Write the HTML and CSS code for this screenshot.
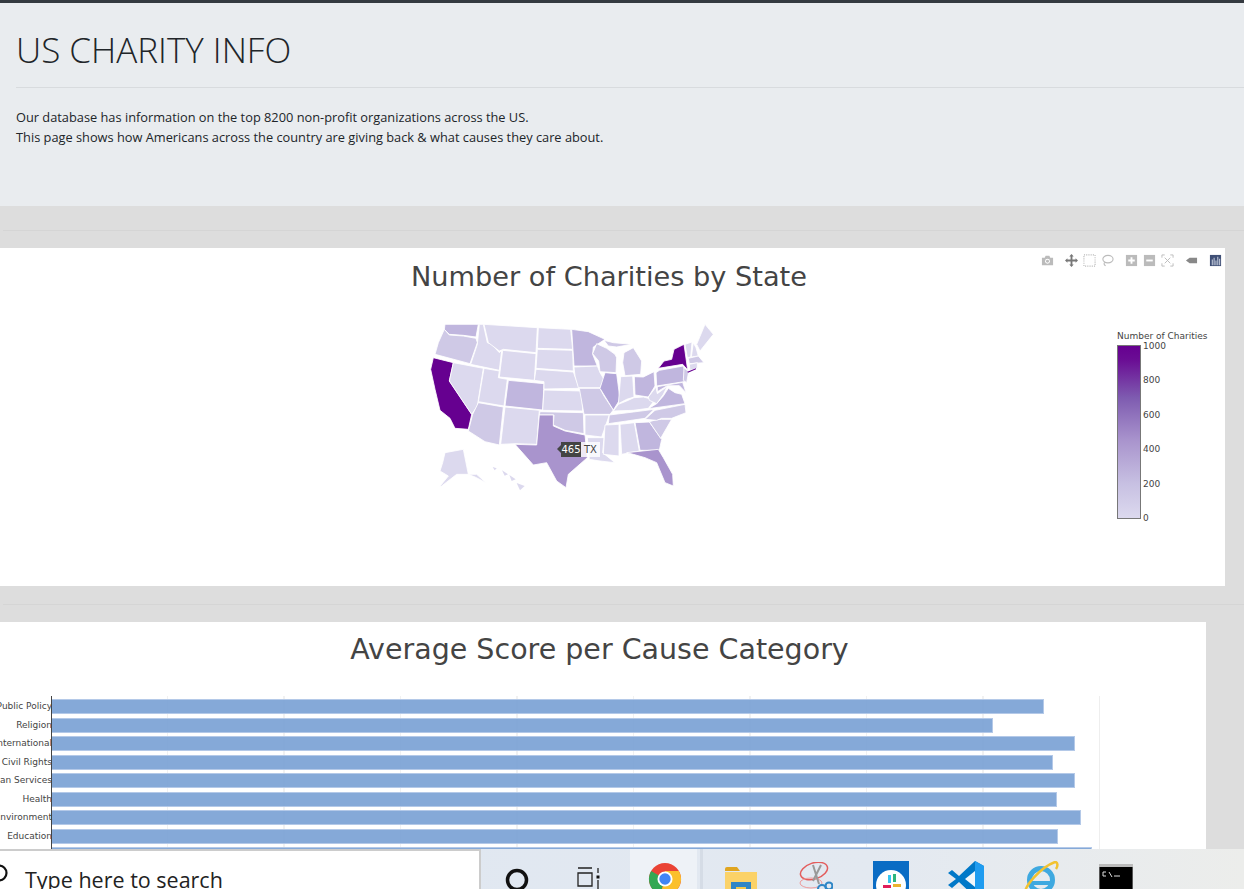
FILE: index.html
```html
<!DOCTYPE html>
<html lang="en">

<head>
    <meta charset="UTF-8">
    <meta name="viewport" content="width=device-width, initial-scale=1.0">
    <title>US Charity Info</title>
    <link rel="stylesheet" href="styles.css">
</head>

<body>
    <div class="page">
        <header class="jumbotron">
            <h1>US CHARITY INFO</h1>
            <hr class="jumbo-line">
            <p>Our database has information on the top 8200 non-profit organizations across the US.<br>This page shows how Americans across the country are giving back &amp; what causes they care about.</p>
        </header>

        <hr class="section-line">

        <!-- map chart -->
        <section class="chart chart-map">
            <div class="modebar">
                <svg class="mode-icon" viewBox="0 0 14 14"><path class="mode-fill" d="M1 4h3l1-2h4l1 2h3v8H1z"/><circle cx="7" cy="7.8" r="2.6" fill="#fff"/><circle cx="7" cy="7.8" r="1.6" class="mode-fill"/></svg>
                <svg class="mode-icon gap-lg" viewBox="0 0 14 14"><path class="mode-dark" d="M7 0l2.4 2.6H8V6h3.4V4.6L14 7l-2.6 2.4V8H8v3.4h1.4L7 14l-2.4-2.6H6V8H2.6v1.4L0 7l2.6-2.4V6H6V2.6H4.6z"/></svg>
                <svg class="mode-icon gap-sm" viewBox="0 0 14 14"><rect x="1" y="1" width="12" height="12" fill="none" stroke="#bbb" stroke-width="1.2" stroke-dasharray="1.2 1.2"/></svg>
                <svg class="mode-icon gap-sm" viewBox="0 0 14 14"><ellipse cx="7.5" cy="5.5" rx="5.5" ry="4" fill="none" stroke="#bbb" stroke-width="1.2"/><path d="M4 9c-1 1-1 3 1 3.5" fill="none" stroke="#bbb" stroke-width="1.2"/></svg>
                <svg class="mode-icon gap-lg" viewBox="0 0 14 14"><path class="mode-fill" d="M1 1h12v12H1z"/><path d="M6 3.500h2V6h2.500v2H8v2.500H6V8H3.500V6H6z" fill="#fff"/></svg>
                <svg class="mode-icon gap-sm" viewBox="0 0 14 14"><path class="mode-fill" d="M1 1h12v12H1z"/><path d="M3.500 6h7v2h-7z" fill="#fff"/></svg>
                <svg class="mode-icon gap-sm" viewBox="0 0 14 14"><path d="M1 4V1h3M10 1h3v3M13 10v3h-3M4 13H1v-3M4 4l6 6M10 4l-6 6" fill="none" stroke="#bbb" stroke-width="1"/></svg>
                <svg class="mode-icon gap-lg" viewBox="0 0 14 14"><path d="M1 7l4-3h8v6H5z" fill="#888"/></svg>
                <svg class="mode-icon gap-lg" viewBox="0 0 14 14"><rect x="1" y="1" width="12" height="12" fill="#3f4f75"/><path d="M3 6h1v6H3zM5 4h1v8H5zM7 7h1v5H7zM9 3h1v9H9zM11 5h1v7h-1z" fill="#d5dbe8"/></svg>
            </div>
            <h2 class="chart-title">Number of Charities by State</h2>
            <div class="map-row">
                <div class="map-wrap">
                    <svg class="us-map" viewBox="0 0 990 570">
                        <polygon class="s3" points="135,40 235,40 228,78 190,73 148,70 133,55"/>
                        <polygon class="s2" points="133,55 148,72 190,75 228,82 232,95 210,158 105,130 115,95"/>
                        <polygon class="s7" points="100,140 160,155 148,210 215,310 205,355 165,352 150,322 120,298 105,235 92,175"/>
                        <polygon class="s1" points="160,155 250,172 232,285 215,310 148,210"/>
                        <polygon class="s1" points="238,40 250,40 262,95 275,100 298,125 305,118 298,178 212,160 232,100"/>
                        <polygon class="s1" points="252,40 412,50 408,125 310,115 298,120 265,95"/>
                        <polygon class="s1" points="308,118 408,128 403,208 298,198"/>
                        <polygon class="s1" points="252,172 298,180 295,200 322,205 312,285 235,272"/>
                        <polygon class="s2" points="235,275 310,288 298,402 255,392 205,360 218,310"/>
                        <polygon class="s3" points="325,208 432,218 428,297 315,285"/>
                        <polygon class="s1" points="315,288 418,298 410,400 345,398 302,400"/>
                        <polygon class="s1" points="415,50 512,55 518,115 412,112"/>
                        <polygon class="s1" points="412,115 518,118 520,180 408,172"/>
                        <polygon class="s1" points="408,175 520,183 538,232 432,234 432,212 403,208"/>
                        <polygon class="s1" points="432,237 545,240 548,300 428,298"/>
                        <polygon class="s2" points="420,302 550,305 552,368 495,358 460,342 462,312 418,312"/>
                        <polygon class="s4" points="418,312 460,312 460,345 495,360 555,372 562,440 505,490 498,530 470,510 440,455 400,462 345,400 410,402"/>
                        <polygon class="s3" points="515,55 565,62 615,85 580,108 578,130 592,165 522,165"/>
                        <polygon class="s1" points="522,168 592,165 600,185 612,205 600,230 535,230 525,195"/>
                        <polygon class="s2" points="538,232 600,232 612,255 640,297 630,310 552,310"/>
                        <polygon class="s1" points="555,312 628,312 605,378 555,372"/>
                        <polygon class="s1" points="562,380 612,380 608,425 645,455 600,450 568,445"/>
                        <polygon class="s2" points="590,98 620,112 645,130 650,140 648,185 600,182 596,150 578,128"/>
                        <polygon class="s3b" points="615,185 650,188 660,265 640,297 600,232"/>
                        <polygon class="s2" points="612,88 640,95 695,100 650,108 625,105"/>
                        <polygon class="s2" points="672,125 700,110 725,150 722,190 675,194 668,155"/>
                        <polygon class="s1" points="662,197 698,195 702,258 680,265 655,278"/>
                        <polygon class="s3" points="703,197 730,198 762,182 765,225 745,258 705,252"/>
                        <polygon class="s1" points="640,300 655,280 680,270 702,260 730,258 745,262 762,270 745,292 700,298"/>
                        <polygon class="s2" points="628,312 700,303 762,295 735,322 625,338"/>
                        <polygon class="s1" points="615,342 657,340 657,435 610,430"/>
                        <polygon class="s1" points="660,340 703,335 718,420 665,430"/>
                        <polygon class="s3" points="705,335 748,333 785,385 778,418 720,418"/>
                        <polygon class="s4" points="680,425 775,415 790,440 818,490 820,525 795,515 770,455 735,440 700,430"/>
                        <polygon class="s2" points="748,332 770,326 785,325 815,325 782,382"/>
                        <polygon class="s2" points="735,325 765,298 855,280 858,305 815,322 785,322 770,328"/>
                        <polygon class="s3" points="745,293 770,278 790,255 805,232 825,245 845,250 855,278"/>
                        <polygon class="s1" points="745,258 768,228 772,248 802,226 790,250 770,278 748,268"/>
                        <polygon class="s3" points="768,185 778,178 850,165 862,200 852,212 770,225"/>
                        <polygon class="s3" points="772,227 848,214 858,245 838,224 802,224 772,242"/>
                        <polygon class="s2" points="852,170 866,182 860,215 850,208"/>
                        <polygon class="s7" points="775,172 792,150 815,145 822,115 852,100 862,170 864,178 848,160"/>
                        <polygon class="s1" points="855,100 876,93 872,138 862,140"/>
                        <polygon class="s1" points="880,95 888,110 895,135 874,138"/>
                        <polygon class="s1" points="890,100 915,40 940,70 900,120"/>
                        <polygon class="s2" points="865,142 895,135 912,155 868,158"/>
                        <polygon class="s1" points="868,160 892,155 892,172 870,178"/>
                        <polygon class="s7 sliver" points="862,182 888,172 888,175 864,185"/>
                        <polygon class="s1" points="135,425 190,415 205,490 170,490 125,525 118,528 145,495 120,480 128,455"/>
                        <polygon class="s1" points="205,490 230,490 258,515 225,498"/>
                        <polygon class="s1 islet" points="350,516 374,525 360,538"/>
                        <polygon class="s1 islet" points="306,478 324,490 314,494"/>
                        <polygon class="s1 islet" points="328,492 347,505 335,510"/>
                        <polygon class="s1 islet" points="278,468 290,472 284,478"/>
                    </svg>
                    <div class="hover-label"><span class="hover-value">465</span><span class="hover-name">TX</span></div>
                </div>
                <div class="colorbar">
                    <div class="colorbar-title">Number of Charities</div>
                    <div class="colorbar-body">
                        <div class="colorbar-ramp"></div>
                        <div class="colorbar-ticks">
                            <span>1000</span><span>800</span><span>600</span><span>400</span><span>200</span><span>0</span>
                        </div>
                    </div>
                </div>
            </div>
        </section>

        <hr class="section-line">

        <!-- bar chart -->
        <section class="chart chart-bars">
            <h2 class="chart-title">Average Score per Cause Category</h2>
            <div class="bar-plot">
                <div class="bar-labels">
                    <span>Public Policy</span><span>Religion</span><span>International</span><span>Civil Rights</span><span>Human Services</span><span>Health</span><span>Environment</span><span>Education</span>
                </div>
                <div class="bar-area">
                    <div class="bar" style="width:992px"></div>
                    <div class="bar" style="width:941px"></div>
                    <div class="bar" style="width:1023px"></div>
                    <div class="bar" style="width:1001px"></div>
                    <div class="bar" style="width:1023px"></div>
                    <div class="bar" style="width:1005px"></div>
                    <div class="bar" style="width:1029px"></div>
                    <div class="bar" style="width:1006px"></div>
                    <div class="bar" style="width:1040px"></div>
                </div>
            </div>
        </section>
    </div>

    <!-- windows taskbar -->
    <footer class="taskbar">
        <div class="search-box">
            <svg class="search-icon" viewBox="0 0 20 20"><circle cx="10" cy="10" r="7.500" fill="none" stroke="#111" stroke-width="2.200"/></svg>
            <span>Type here to search</span>
        </div>
        <svg class="tb-icon cortana" viewBox="0 0 24 24"><circle cx="12" cy="12" r="9.500" fill="none" stroke="#111" stroke-width="3.500"/></svg>
        <svg class="tb-icon taskview" viewBox="0 0 24 24"><path d="M1 1h14M1 6h14v13H1zM1 24h14M21 1v5M21 13v10" fill="none" stroke="#222" stroke-width="1.300"/><rect x="19.500" y="8.500" width="3" height="3" fill="#111"/></svg>
        <div class="chrome-tile">
            <svg class="tb-icon chrome" viewBox="0 0 36 36">
                <circle cx="18" cy="18" r="17" fill="#ea4335"/>
                <path d="M18 18L3.300 9.500A17 17 0 0 0 13 34.300z" fill="#34a853"/>
                <path d="M18 18l-5 16.300A17 17 0 0 0 32.700 9.500H18z" fill="#fbc02d"/>
                <circle cx="18" cy="18" r="8" fill="#fff"/>
                <circle cx="18" cy="18" r="6" fill="#4285f4"/>
            </svg>
        </div>
        <div class="tile-edge"></div>
        <svg class="tb-icon folder" viewBox="0 0 32 32"><path d="M0 3a2 2 0 0 1 2-2h10l3 4H0z" fill="#e0a520"/><path d="M0 6h32v26H0z" fill="#fbd268"/><rect x="6" y="16" width="20" height="16" fill="#2f86c6"/><rect x="11" y="21" width="10" height="10" fill="#f2c94c"/></svg>
        <svg class="tb-icon snip" viewBox="0 0 34 34">
            <ellipse cx="15" cy="9" rx="14" ry="8" fill="none" stroke="#e35d5d" stroke-width="1.500" transform="rotate(-18 15 9)"/>
            <ellipse cx="12" cy="21" rx="11" ry="5" fill="none" stroke="#ee9a9a" stroke-width="1"/>
            <path d="M14 3l6 19M22 3l-8 16" stroke="#999" stroke-width="2" fill="none"/>
            <circle cx="23" cy="27" r="4" fill="none" stroke="#2f86c6" stroke-width="2.200"/>
            <circle cx="30" cy="24" r="3.500" fill="none" stroke="#2f86c6" stroke-width="2.200"/>
        </svg>
        <svg class="tb-icon slack" viewBox="0 0 36 36">
            <rect width="36" height="36" fill="#0a6cc4"/>
            <circle cx="18" cy="24" r="15" fill="#fff"/>
            <path d="M15 14h3v8h-3z" fill="#36c5f0"/><path d="M20 13h3v8h-3z" fill="#2eb67d"/><path d="M10 24h8v3h-8z" fill="#e01e5a"/><path d="M20 23h8v3h-8z" fill="#ecb22e"/>
        </svg>
        <svg class="tb-icon vscode" viewBox="0 0 36 36">
            <path d="M27 0l9 5v26l-9 5-16-15-7 6-4-3 8-6-8-6 4-3 7 6z" fill="#0078c8"/>
            <path d="M27 0l9 5v26l-9 5z" fill="#1f9cf0"/><path d="M27 10v16l-10-8z" fill="#f3f7fb"/>
        </svg>
        <svg class="tb-icon ie" viewBox="0 0 36 36">
            <circle cx="18" cy="19" r="11.500" fill="none" stroke="#3fa9e0" stroke-width="5"/>
            <path d="M6 20h24v4H6z" fill="#3fa9e0"/>
            <path d="M2 34C0 26 18 6 32 1c3 0 3 4 1 7" fill="none" stroke="#f2c230" stroke-width="2.500"/>
        </svg>
        <svg class="tb-icon cmd" viewBox="0 0 34 34">
            <rect width="34" height="34" fill="#555"/><rect x="1" y="3" width="32" height="31" fill="#000"/>
            <path d="M0 0h34v3H0z" fill="#bbb"/>
            <path d="M4 8h3M4 8v4h3M10 8l3 5M15 12h6" fill="none" stroke="#ddd" stroke-width="1"/>
        </svg>
    </footer>
</body>

</html>
```

FILE: styles.css
```css
* {
    margin: 0;
    padding: 0;
    box-sizing: border-box;
}

html,
body {
    height: 100%;
}

body {
    display: flex;
    flex-direction: column;
    height: 889px;
    overflow: hidden;
    background-color: #ddd;
    font-family: "Open Sans", sans-serif;
}

.page {
    flex: 1;
    min-height: 0;
    overflow: hidden;
    border-top: 3px solid #343a40;
}

.jumbotron {
    height: 203px;
    padding: 28px 0 0 16px;
    background-color: #e9ecef;
    color: #212529;
}

.jumbotron h1 {
    height: 38px;
    font-size: 35px;
    font-weight: 300;
    line-height: 38px;
    white-space: nowrap;
}

.jumbo-line {
    margin: 18px 0 19px;
    border: 0;
    border-top: 1px solid #d8dbde;
}

.jumbotron p {
    font-size: 12.800px;
    line-height: 20px;
    white-space: nowrap;
}

.section-line {
    margin: 24px 0 17px 3px;
    border: 0;
    border-top: 1px solid #d5d5d5;
}

.chart + .section-line {
    margin-top: 18px;
}

.chart {
    position: relative;
    background-color: #fff;
}

.chart-map {
    width: 1225px;
    height: 338px;
}

.chart-bars {
    width: 1206px;
    height: 300px;
}

.chart-title {
    padding-right: 7px;
    font-family: "DejaVu Sans", sans-serif;
    font-weight: 400;
    line-height: 34px;
    color: #444;
    text-align: center;
}

.chart-map .chart-title {
    padding-top: 12px;
    font-size: 27.200px;
}

.chart-bars .chart-title {
    padding-top: 11px;
    font-size: 28.500px;
}

/* modebar sits over the plot */
.modebar {
    position: absolute;
    top: 6px;
    left: 1041px;
    display: flex;
}

.mode-icon {
    width: 13px;
    height: 13px;
}

.gap-sm {
    margin-left: 5px;
}

.gap-lg {
    margin-left: 11px;
}

.mode-fill {
    fill: #bbb;
}

.mode-dark {
    fill: #777;
}

.map-row {
    display: flex;
    align-items: flex-start;
    padding: 17px 0 0 400px;
}

.map-wrap {
    position: relative;
    width: 330px;
    height: 190px;
}

.us-map {
    display: block;
    width: 330px;
    height: 190px;
}

.us-map polygon {
    stroke: #fff;
    stroke-width: 2.500;
    stroke-linejoin: round;
}

.us-map .sliver,
.us-map .islet {
    stroke: none;
}

.s1 {
    fill: #dcd9ee;
}

.s2 {
    fill: #cfc9e6;
}

.s3 {
    fill: #c0b6de;
}

.s3b {
    fill: #b2a6d8;
}

.s4 {
    fill: #a994cd;
}

.s7 {
    fill: #660090;
}

.hover-label {
    position: absolute;
    top: 131px;
    left: 161px;
    display: flex;
    height: 15px;
    font-family: "DejaVu Sans", sans-serif;
    font-size: 10px;
    line-height: 15px;
}

.hover-value {
    position: relative;
    width: 20px;
    background-color: #444;
    color: #fff;
    text-align: center;
}

.hover-value::before {
    content: "";
    position: absolute;
    top: 3px;
    left: -4px;
    border-top: 4px solid transparent;
    border-bottom: 4px solid transparent;
    border-right: 4px solid #444;
}

.hover-name {
    width: 19px;
    background-color: rgba(255, 255, 255, .8);
    color: #444;
    text-align: center;
}

.colorbar {
    margin: 19px 0 0 387px;
    font-family: "DejaVu Sans", sans-serif;
    font-size: 9px;
    color: #444;
}

.colorbar-title {
    height: 12px;
    line-height: 12px;
    white-space: nowrap;
}

.colorbar-body {
    display: flex;
    height: 174px;
    margin-top: 3px;
}

.colorbar-ramp {
    width: 24px;
    border: 1px solid #777;
    background: linear-gradient(to bottom, #660090 0%, #6a0d94 8%, #7e5bb0 30%, #a994cd 55%, #c7c0e2 80%, #dcd9ee 100%);
}

.colorbar-ticks {
    display: flex;
    flex-direction: column;
    justify-content: space-between;
    margin: -5px 0 -5px 2px;
    line-height: 12px;
}

.bar-plot {
    position: relative;
    margin: 29px 0 0 51px;
    width: 1049px;
    height: 200px;
    border-left: 1px solid #444;
    border-right: 1px solid #eee;
    background-image: repeating-linear-gradient(to right, transparent 0, transparent 115px, #f1f1f1 115px, #f1f1f1 116.500px);
}

.bar-labels {
    position: absolute;
    top: 1px;
    right: 100%;
    display: flex;
    flex-direction: column;
    align-items: flex-end;
    font-family: "DejaVu Sans", sans-serif;
    font-size: 9px;
    line-height: 18.500px;
    color: #444;
    white-space: nowrap;
}

.bar-area {
    display: flex;
    flex-direction: column;
    gap: 3.500px;
    padding-top: 3px;
}

.bar {
    height: 15px;
    background-color: rgba(120, 160, 212, .9);
    border: 1px solid #b4c9e8;
    border-left: 0;
}

.taskbar {
    display: flex;
    align-items: flex-start;
    flex: none;
    height: 40px;
    overflow: hidden;
    background: linear-gradient(to right, #dee6f1 0%, #e3e9f1 70%, #ecedeb 100%);
}

.search-box {
    flex: none;
    display: flex;
    width: 481px;
    height: 40px;
    padding: 9px 0 0 25px;
    position: relative;
    background-color: #fff;
    border-top: 2px solid #ccc;
    border-right: 2px solid #ccc;
    font-size: 21.500px;
    line-height: 40px;
    color: #222;
    white-space: nowrap;
}

.search-icon {
    position: absolute;
    top: 12px;
    left: -11px;
    width: 20px;
    height: 20px;
}

.tb-icon {
    flex: none;
    display: block;
}

.cortana {
    width: 24px;
    height: 24px;
    margin: 19px 0 0 24px;
}

.taskview {
    width: 24px;
    height: 24px;
    margin: 18px 0 0 48px;
}

.chrome-tile {
    flex: none;
    width: 67px;
    height: 40px;
    margin-left: 29px;
    padding: 13px 0 0 18px;
    background-color: #eef2f7;
}

.chrome {
    width: 34px;
    height: 34px;
}

.tile-edge {
    flex: none;
    width: 3px;
    height: 40px;
    margin-left: 3px;
    background-color: #d5dce6;
}

.folder {
    width: 32px;
    height: 32px;
    margin: 17px 0 0 22px;
}

.snip {
    width: 34px;
    height: 34px;
    margin: 13px 0 0 42px;
}

.slack {
    width: 36px;
    height: 36px;
    margin: 12px 0 0 40px;
}

.vscode {
    width: 36px;
    height: 36px;
    margin: 12px 0 0 39px;
}

.ie {
    width: 36px;
    height: 36px;
    margin: 12px 0 0 39px;
}

.cmd {
    width: 34px;
    height: 34px;
    margin: 15px 0 0 40px;
}
```
